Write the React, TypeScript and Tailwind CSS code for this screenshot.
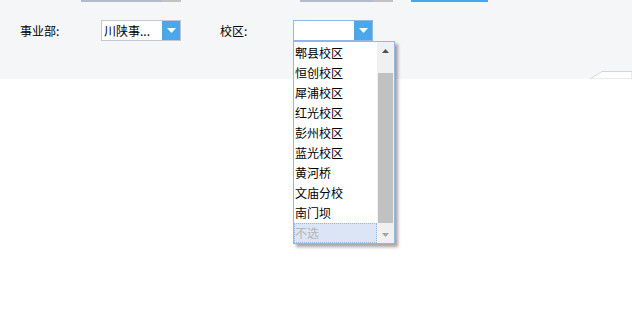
import React from "react";

const items = ["郫县校区", "恒创校区", "犀浦校区", "红光校区", "彭州校区", "蓝光校区", "黄河桥", "文庙分校", "南门坝"];

function Arrow() {
  return (
    <div className="w-[18px] h-full bg-[#4ba6ea] flex items-center justify-center">
      <svg width="9" height="5" viewBox="0 0 9 5"><path d="M0 0 L9 0 L4.5 5 Z" fill="#fff" /></svg>
    </div>
  );
}

export default function App() {
  const font = { fontFamily: '"Noto Sans CJK SC", "Noto Sans", sans-serif' };
  return (
    <div className="w-[632px] h-[329px] bg-white relative overflow-hidden text-[12px] text-black" style={font}>
      <div className="h-[79px] bg-[#f5f6f8] relative">
        <div className="flex h-[2px]">
          <div className="ml-[81px] w-[81px] h-[2px] bg-[#b4bacd]" />
          <div className="w-[19px] h-[2px] bg-[#c2c2c2]" />
          <div className="ml-[119px] w-[73px] h-[2px] bg-[#b4bacd]" />
          <div className="w-[20px] h-[2px] bg-[#c2c2c2]" />
          <div className="ml-[18px] w-[77px] h-[2px] bg-[#45a5ee]" />
        </div>
        <div className="flex items-center mt-[18px] h-[21px]">
          <div className="ml-[20px] w-[81px] leading-[21px]">事业部:</div>
          <div className="w-[80px] h-[21px] border border-[#c3c6ce] bg-white flex">
            <div className="flex-1 pl-[2px] leading-[19px] overflow-hidden whitespace-nowrap">川陕事...</div>
            <Arrow />
          </div>
          <div className="ml-[39px] w-[73px] leading-[21px]">校区:</div>
          <div className="w-[80px] h-[21px] border border-[#8fb7e8] bg-white flex">
            <div className="flex-1" />
            <Arrow />
          </div>
        </div>
        <svg className="absolute right-0 bottom-0" width="42" height="9" viewBox="0 0 42 9">
          <path d="M0 9 L12 1.5 L42 1.5 L42 9 Z" fill="#fff" stroke="#d4d6da" strokeWidth="1" />
        </svg>
      </div>
      <div className="absolute left-[293px] top-[41px] w-[102px] h-[203px] border border-[#8fb7e8] bg-white flex shadow-[3px_3px_3px_rgba(0,0,0,0.35)]">
        <div className="flex-1 flex flex-col pt-[1px]">
          {items.map((t) => (
            <div key={t} className="h-[20px] leading-[20px] pl-[1px] whitespace-nowrap">{t}</div>
          ))}
          <div className="h-[20px] leading-[18px] bg-[#dce5f5] border border-dotted border-[#8fb7e8] text-[#b5b5b5] whitespace-nowrap">不选</div>
        </div>
        <div className="w-[17px] bg-[#f0f0f0] flex flex-col items-center">
          <div className="h-[17px] w-full flex items-center justify-center">
            <svg width="7" height="4" viewBox="0 0 7 4"><path d="M0 4 L7 4 L3.5 0 Z" fill="#505050" /></svg>
          </div>
          <div className="mt-[14px] w-[15px] h-[150px] bg-[#c1c1c1]" />
          <div className="flex-1" />
          <div className="h-[17px] w-full flex items-center justify-center">
            <svg width="7" height="4" viewBox="0 0 7 4"><path d="M0 0 L7 0 L3.5 4 Z" fill="#a3a3a3" /></svg>
          </div>
        </div>
      </div>
    </div>
  );
}
